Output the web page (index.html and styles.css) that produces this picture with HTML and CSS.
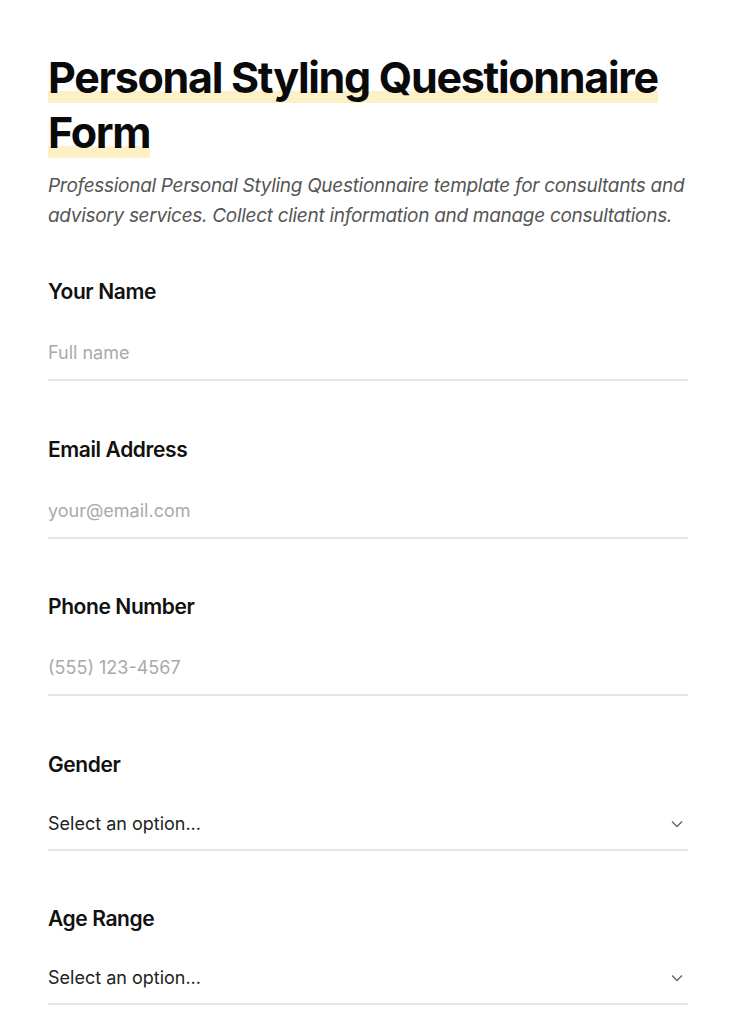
FILE: index.html
```html
<!DOCTYPE html>
<html lang="en">
<head>
<meta charset="UTF-8">
<meta name="viewport" content="width=device-width, initial-scale=1.0">
<title>Personal Styling Questionnaire Form</title>
<link rel="stylesheet" href="styles.css">
</head>
<body>

<div class="form-page">
  <h1 class="form-title"><span class="title-mark">Personal Styling Questionnaire Form</span></h1>
  <p class="form-intro">Professional Personal Styling Questionnaire template for consultants and advisory services. Collect client information and manage consultations.</p>

  <form class="style-form">
    <div class="field">
      <label for="name">Your Name</label>
      <input type="text" id="name" placeholder="Full name">
    </div>

    <div class="field">
      <label for="email">Email Address</label>
      <input type="email" id="email" placeholder="your@email.com">
    </div>

    <div class="field">
      <label for="phone">Phone Number</label>
      <input type="tel" id="phone" placeholder="(555) 123-4567">
    </div>

    <div class="field">
      <label for="gender">Gender</label>
      <div class="select-wrap">
        <select id="gender">
          <option>Select an option...</option>
          <option>Female</option>
          <option>Male</option>
          <option>Non-binary</option>
          <option>Prefer not to say</option>
        </select>
        <svg class="chevron" width="14" height="14" viewBox="0 0 14 14"><path d="M2 4.5l5 5 5-5" fill="none" stroke="#666" stroke-width="1.4"/></svg>
      </div>
    </div>

    <div class="field">
      <label for="age">Age Range</label>
      <div class="select-wrap">
        <select id="age">
          <option>Select an option...</option>
          <option>18-24</option>
          <option>25-34</option>
          <option>35-44</option>
          <option>45-54</option>
          <option>55+</option>
        </select>
        <svg class="chevron" width="14" height="14" viewBox="0 0 14 14"><path d="M2 4.5l5 5 5-5" fill="none" stroke="#666" stroke-width="1.4"/></svg>
      </div>
    </div>
  </form>
</div>

</body>
</html>
```

FILE: styles.css
```css
body {
  margin: 0;
  background: #fff;
  color: #111;
  font-family: "Inter", "Liberation Sans", sans-serif;
}

.form-page {
  width: 640px;
  padding: 50px 48px 40px;
}

.form-title {
  margin: 0;
  font-size: 43px;
  line-height: 55px;
  font-weight: 700;
  letter-spacing: -1.3px;
  color: #0a0a0a;
}

.title-mark {
  background: linear-gradient(to top, #fdf0c6 0, #fdf0c6 12px, transparent 12px);
  -webkit-box-decoration-break: clone;
  box-decoration-break: clone;
}

.form-intro {
  margin: 11px 0 0;
  font-size: 19px;
  line-height: 30px;
  font-style: italic;
  color: #555;
  letter-spacing: -0.3px;
}

.style-form {
  margin-top: 47px;
}

.field {
  margin-bottom: 54.5px;
}

.field label {
  display: block;
  font-size: 21px;
  line-height: 28px;
  font-weight: 600;
  letter-spacing: -0.4px;
  color: #111;
}

.field input,
.field select {
  display: block;
  width: 100%;
  box-sizing: border-box;
  margin-top: 21px;
  padding: 15px 0;
  border: none;
  border-bottom: 2px solid #e5e5e5;
  background: transparent;
  font-family: inherit;
  font-size: 18px;
  line-height: 22px;
  color: #222;
  outline: none;
}

.field input::placeholder {
  color: #aaa;
}

.select-wrap {
  position: relative;
  margin-top: 19px;
}

.field select {
  -webkit-appearance: none;
  appearance: none;
  margin-top: 0;
  padding: 15px 30px 14px 0;
}

.chevron {
  position: absolute;
  right: 4px;
  top: 19px;
  pointer-events: none;
}
```
